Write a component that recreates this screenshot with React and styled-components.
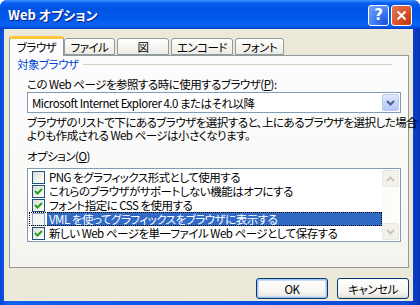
import React from "react";
import styled, { createGlobalStyle } from "styled-components";

const Global = createGlobalStyle`
  html, body {
    margin: 0;
    padding: 0;
    background: #ffffff;
  }
  body {
    font-family: "Noto Sans CJK JP", "Noto Sans", sans-serif;
    font-size: 11.5px;
    letter-spacing: -0.5px;
    font-feature-settings: "palt";
    color: #000000;
  }
`;

const Window = styled.div`
  width: 420px;
  height: 305px;
  box-sizing: border-box;
  display: flex;
  flex-direction: column;
  background: linear-gradient(90deg, #0846d8 0%, #1160ee 2%, #0c52e4 50%, #0a48d8 97%, #0734b8 100%);
  border-radius: 7px 7px 0 0;
  overflow: hidden;
`;

const TitleBar = styled.div`
  height: 29px;
  flex-shrink: 0;
  display: flex;
  align-items: center;
  padding: 0 7px 0 8px;
  background: linear-gradient(
    180deg,
    #3d95ff 0%,
    #0a5ff1 10%,
    #0054e3 30%,
    #0058ea 60%,
    #0a62f5 85%,
    #0450e0 95%,
    #0338c8 100%
  );
`;

const Title = styled.div`
  flex: 1;
  color: #ffffff;
  font-weight: bold;
  font-size: 13px;
  letter-spacing: 0;
  text-shadow: 1px 1px 0 #0a1e8c;
`;

const Controls = styled.div`
  display: flex;
  gap: 2px;
  margin-top: 1px;
  margin-right: 1px;
`;

const CtrlButton = styled.div`
  width: 21px;
  height: 21px;
  box-sizing: border-box;
  border: 1px solid #ffffff;
  border-radius: 3px;
  display: flex;
  align-items: center;
  justify-content: center;
  color: #ffffff;
  letter-spacing: 0;
  background: ${(p) =>
    p.$danger
      ? "radial-gradient(circle at 90% 90%, #c23b0d 0%, #d8502a 45%, #e3775a 100%)"
      : "radial-gradient(circle at 90% 90%, #1d4fd6 0%, #3a7af3 45%, #7aa6f8 100%)"};
  font: bold 15px "DejaVu Sans", sans-serif;
`;

const Body = styled.div`
  flex: 1;
  display: flex;
  flex-direction: column;
  margin: 0 7px 4px 4px;
  padding: 6px 4px 0 5px;
  background: #ece9d8;
`;

const TabRow = styled.div`
  display: flex;
  align-items: flex-end;
  height: 20px;
  position: relative;
  z-index: 1;
`;

const Tab = styled.div`
  width: ${(p) => p.$w}px;
  height: ${(p) => (p.$active ? 20 : 17)}px;
  margin-right: ${(p) => (p.$active ? 0 : 2)}px;
  margin-bottom: ${(p) => (p.$active ? -1 : 0)}px;
  box-sizing: border-box;
  display: flex;
  align-items: center;
  justify-content: center;
  border: 1px solid #919b9c;
  border-bottom: ${(p) => (p.$active ? "none" : "1px solid #919b9c")};
  border-top: ${(p) => (p.$active ? "3px solid #ffc83c" : "1px solid #919b9c")};
  border-radius: 3px 3px 0 0;
  background: ${(p) =>
    p.$active ? "#fcfcfe" : "linear-gradient(180deg, #ffffff 0%, #f4f3ee 60%, #ecebe6 100%)"};
  line-height: 14px;
  padding-bottom: ${(p) => (p.$active ? 1 : 0)}px;
`;

const Panel = styled.div`
  height: 213px;
  box-sizing: border-box;
  border: 1px solid #919b9c;
  background: linear-gradient(180deg, #fcfcfe 0%, #f9f9f6 60%, #f4f3ee 100%);
  padding: 1px 7px 0 7px;
  display: flex;
  flex-direction: column;
`;

const GroupHead = styled.div`
  display: flex;
  align-items: center;
  height: 14px;
  color: #0046d5;
  line-height: 14px;
`;

const GroupLine = styled.div`
  flex: 1;
  height: 1px;
  margin: 1px 9px 0 5px;
  background: #d0d0bf;
`;

const Section = styled.div`
  padding-left: 10px;
  display: flex;
  flex-direction: column;
`;

const Label = styled.div`
  line-height: 14px;
  height: 14px;
  margin-top: ${(p) => p.$mt || 0}px;
  white-space: nowrap;
`;

const Key = styled.span`
  text-decoration: underline;
  text-underline-offset: 1px;
`;

const Select = styled.div`
  height: 21px;
  margin-top: 1px;
  box-sizing: border-box;
  border: 1px solid #7f9db9;
  background: #ffffff;
  display: flex;
  align-items: center;
  padding: 0 1px 0 4px;
`;

const SelectText = styled.div`
  flex: 1;
  line-height: 14px;
  white-space: nowrap;
`;

const DropButton = styled.div`
  width: 17px;
  height: 17px;
  box-sizing: border-box;
  border: 1px solid #bac9f0;
  border-radius: 2px;
  background: linear-gradient(180deg, #e2ebfe 0%, #c6d6fc 50%, #b4c8f6 100%);
  display: flex;
  align-items: center;
  justify-content: center;
`;

const Desc = styled.div`
  margin-top: 3px;
  line-height: 12.5px;
  white-space: nowrap;
`;

const ListBox = styled.div`
  height: 74px;
  margin-top: 5px;
  box-sizing: border-box;
  border: 1px solid #7f9db9;
  background: #ffffff;
  display: flex;
  padding: 1px;
`;

const Items = styled.div`
  flex: 1;
  display: flex;
  flex-direction: column;
`;

const Row = styled.div`
  height: 14px;
  display: flex;
  align-items: center;
  box-sizing: border-box;
  padding-left: 3px;
  outline: ${(p) => (p.$focus ? "1px dotted #000" : "none")};
  outline-offset: -1px;
`;

const Box = styled.div`
  width: 13px;
  height: 13px;
  box-sizing: border-box;
  border: 1px solid ${(p) => (p.$pale ? "#8aa4c4" : "#1c5180")};
  background: ${(p) =>
    p.$pale ? "#f4f4f0" : "linear-gradient(135deg, #dcdcd7 0%, #f0f0ea 50%, #ffffff 100%)"};
  display: flex;
  align-items: center;
  justify-content: center;
  flex-shrink: 0;
`;

const RowText = styled.div`
  flex: 1;
  height: 14px;
  margin-left: 2px;
  padding-left: 2px;
  line-height: 14px;
  white-space: nowrap;
  color: ${(p) => (p.$sel ? "#ffffff" : "#000000")};
  background: ${(p) => (p.$sel ? "#316ac5" : "transparent")};
`;

const ScrollBar = styled.div`
  width: 17px;
  display: flex;
  flex-direction: column;
  justify-content: space-between;
  background: #fcfcf9;
`;

const ScrollBtn = styled.div`
  width: 17px;
  height: 17px;
  box-sizing: border-box;
  border: 1px solid #e8e8e0;
  border-radius: 2px;
  background: #f2f1ea;
  display: flex;
  align-items: center;
  justify-content: center;
`;

const Footer = styled.div`
  display: flex;
  justify-content: flex-end;
  gap: 9px;
  margin-top: 10px;
`;

const Button = styled.div`
  width: 72px;
  height: 21px;
  box-sizing: border-box;
  border: 1px solid #003c74;
  border-radius: 3px;
  background: linear-gradient(180deg, #ffffff 0%, #f5f4ef 70%, #e3e2da 100%);
  box-shadow: ${(p) =>
    p.$def ? "inset 0 0 0 1px #a8c2f0, inset 0 0 0 2px #cddcf7" : "inset 0 -1px 0 #d6d0c5"};
  display: flex;
  align-items: center;
  justify-content: center;
  line-height: 14px;
`;

const Chevron = ({ up, color }) => (
  <svg width="9" height="6" viewBox="0 0 9 6">
    <path
      d={up ? "M1 5 L4.5 1.5 L8 5" : "M1 1 L4.5 4.5 L8 1"}
      fill="none"
      stroke={color}
      strokeWidth="2"
    />
  </svg>
);

const Check = () => (
  <svg width="9" height="9" viewBox="0 0 9 9">
    <path d="M1 4 L3.5 6.5 L8 2" fill="none" stroke="#21a121" strokeWidth="2" />
  </svg>
);

const options = [
  { text: "PNG をグラフィックス形式として使用する", checked: false },
  { text: "これらのブラウザがサポートしない機能はオフにする", checked: true },
  { text: "フォント指定に CSS を使用する", checked: true },
  { text: "VML を使ってグラフィックスをブラウザに表示する", checked: false, selected: true },
  { text: "新しい Web ページを単一ファイル Web ページとして保存する", checked: true },
];

const tabs = [
  { label: "ブラウザ", w: 55, active: true },
  { label: "ファイル", w: 51 },
  { label: "図", w: 52 },
  { label: "エンコード", w: 62 },
  { label: "フォント", w: 49 },
];

export default function App() {
  return (
    <>
      <Global />
      <Window>
        <TitleBar>
          <Title>Web オプション</Title>
          <Controls>
            <CtrlButton>?</CtrlButton>
            <CtrlButton $danger>
              <svg width="11" height="11" viewBox="0 0 11 11">
                <path d="M1.5 1.5 L9.5 9.5 M9.5 1.5 L1.5 9.5" stroke="#fff" strokeWidth="2" />
              </svg>
            </CtrlButton>
          </Controls>
        </TitleBar>
        <Body>
          <TabRow>
            {tabs.map((t) => (
              <Tab key={t.label} $w={t.w} $active={t.active}>
                {t.label}
              </Tab>
            ))}
          </TabRow>
          <Panel>
            <GroupHead>
              対象ブラウザ
              <GroupLine />
            </GroupHead>
            <Section>
              <Label $mt={6}>
                この Web ページを参照する時に使用するブラウザ(<Key>P</Key>):
              </Label>
              <Select>
                <SelectText>Microsoft Internet Explorer 4.0 またはそれ以降</SelectText>
                <DropButton>
                  <Chevron color="#4d6185" />
                </DropButton>
              </Select>
              <Desc>
                ブラウザのリストで下にあるブラウザを選択すると、上にあるブラウザを選択した場合
                <br />
                よりも作成される Web ページは小さくなります。
              </Desc>
              <Label $mt={8}>
                オプション(<Key>O</Key>)
              </Label>
              <ListBox>
                <Items>
                  {options.map((o) => (
                    <Row key={o.text} $focus={o.selected}>
                      <Box $pale={o.selected}>{o.checked && <Check />}</Box>
                      <RowText $sel={o.selected}>{o.text}</RowText>
                    </Row>
                  ))}
                </Items>
                <ScrollBar>
                  <ScrollBtn>
                    <Chevron up color="#c9c7ba" />
                  </ScrollBtn>
                  <ScrollBtn>
                    <Chevron color="#c9c7ba" />
                  </ScrollBtn>
                </ScrollBar>
              </ListBox>
            </Section>
          </Panel>
          <Footer>
            <Button $def>OK</Button>
            <Button>キャンセル</Button>
          </Footer>
        </Body>
      </Window>
    </>
  );
}
